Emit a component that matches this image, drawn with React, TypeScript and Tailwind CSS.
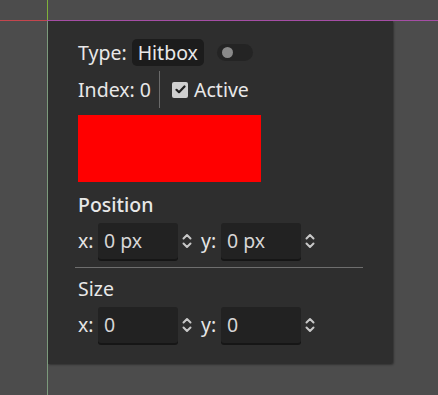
function Spinner() {
  return (
    <svg width="12" height="18" viewBox="0 0 12 18" className="shrink-0" fill="none" stroke="#c8c8c8" strokeWidth="2" strokeLinecap="round" strokeLinejoin="round">
      <path d="M2.5 6.5 L6 3 L9.5 6.5" />
      <path d="M2.5 11.5 L6 15 L9.5 11.5" />
    </svg>
  );
}

function NumberField({ label, value }: { label: string; value: string }) {
  return (
    <div className="flex items-center">
      <span className="w-[20px] text-[#e6e6e6]">{label}</span>
      <div className="h-[36px] w-[80px] rounded-[3px] bg-[#222222] shadow-[0_2px_0_#161616] flex items-center pl-[6px] text-[#d6d6d6]">
        {value}
      </div>
      <div className="ml-[3px] mr-[8px]">
        <Spinner />
      </div>
    </div>
  );
}

export default function App() {
  return (
    <div className="w-[438px] h-[395px] overflow-hidden relative bg-[#4c4c4c] font-['Noto_Sans',sans-serif] text-[19.5px] leading-none text-[#e8e8e8]">
      <div className="absolute left-0 top-[20px] h-px w-[47px] bg-[#c4464e]" />
      <div className="absolute left-[47px] top-[20px] h-px right-0 bg-[#a54ea5]" />
      <div className="absolute left-[47px] top-0 h-[20px] w-px bg-[#7fb13a]" />
      <div className="absolute left-[47px] top-[21px] bottom-0 w-px bg-[#7c9a7c]" />

      <div className="pl-[48px] pt-[21px]">
        <div className="w-[345px] h-[343px] bg-[#2e2e2e] rounded-br-[3px] shadow-[1px_1px_2px_rgba(0,0,0,0.35)] pl-[30px] pr-[30px] pt-[18px]">
          <div className="flex items-center h-[27px]">
            <span>Type:</span>
            <span className="ml-[5px] h-[27px] px-[6px] rounded-[5px] bg-[#1c1c1c] flex items-center">Hitbox</span>
            <div className="ml-[13px] w-[36px] h-[17px] rounded-full bg-[#242424] flex items-center pl-[5px]">
              <div className="w-[11px] h-[11px] rounded-full bg-[#8a8a8a]" />
            </div>
          </div>

          <div className="flex items-center h-[37px] mt-[5px]">
            <span>Index: 0</span>
            <div className="ml-[8px] w-px h-[37px] bg-[#6a6a6a]" />
            <div className="ml-[12px] w-[16px] h-[16px] rounded-[2px] bg-[#cfcfcf] flex items-center justify-center">
              <svg width="11" height="9" viewBox="0 0 11 9" fill="none" stroke="#1e1e1e" strokeWidth="2.2" strokeLinecap="round" strokeLinejoin="round">
                <path d="M1.5 4.8 L4 7.2 L9.5 1.5" />
              </svg>
            </div>
            <span className="ml-[6px]">Active</span>
          </div>

          <div className="mt-[7px] w-[183px] h-[67px] bg-[#ff0000]" />

          <div className="mt-[13px] font-medium">Position</div>
          <div className="mt-[8px] flex items-center">
            <NumberField label="x:" value="0 px" />
            <NumberField label="y:" value="0 px" />
          </div>

          <div className="mt-[8px] -ml-[3px] w-[288px] h-px bg-[#6e6e6e]" />

          <div className="mt-[11px]">Size</div>
          <div className="mt-[9px] flex items-center">
            <NumberField label="x:" value="0" />
            <NumberField label="y:" value="0" />
          </div>
        </div>
      </div>
    </div>
  );
}
